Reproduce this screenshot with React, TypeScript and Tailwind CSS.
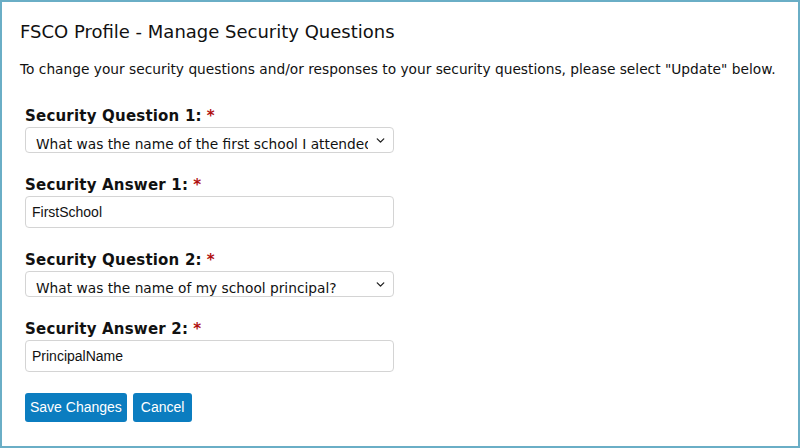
import { ChevronDown } from 'lucide-react';

const verdana = "font-['DejaVu_Sans',Verdana,sans-serif]";
const arial = "font-['Liberation_Sans',Arial,sans-serif]";

const Label = ({ text }: { text: string }) => (
  <div className={`${verdana} text-[15px] tracking-[0.2px] font-bold text-[#111] leading-none mb-[3px]`}>
    {text}
    <span className="text-[#b01010] ml-[5px]">*</span>
  </div>
);

const Select = ({ value }: { value: string }) => (
  <div className="relative w-[369px] h-[26px] border border-[#d4d4d4] rounded-[4px] bg-white overflow-hidden">
    <div className={`${verdana} text-[13.75px] text-[#111] ml-[10px] mr-[25px] pt-[4px] leading-[24px] whitespace-nowrap overflow-hidden`}>
      {value}
    </div>
    <ChevronDown className="absolute right-[6px] top-[6px] text-[#222]" size={13} strokeWidth={2.5} />
  </div>
);

const TextInput = ({ value }: { value: string }) => (
  <div className={`${arial} w-[369px] h-[32px] border border-[#d4d4d4] rounded-[4px] bg-white px-[6px] text-[14px] text-[#111] leading-[30px]`}>
    {value}
  </div>
);

export default function App() {
  return (
    <div className="w-[800px] h-[448px] bg-white border-2 border-[#6aaec6] box-border overflow-hidden">
      <div className="pl-[18px] pt-[21px]">
        <h1 className={`${verdana} text-[18px] text-[#111] leading-none`}>
          FSCO Profile - Manage Security Questions
        </h1>
        <p className={`${verdana} text-[13.75px] text-[#111] leading-none mt-[22px]`}>
          To change your security questions and/or responses to your security questions, please select "Update" below.
        </p>
        <div className="pl-[5px] mt-[32px] flex flex-col">
          <Label text="Security Question 1:" />
          <Select value="What was the name of the first school I attended?" />
          <div className="mt-[25px]">
            <Label text="Security Answer 1:" />
          </div>
          <TextInput value="FirstSchool" />
          <div className="mt-[25px]">
            <Label text="Security Question 2:" />
          </div>
          <Select value="What was the name of my school principal?" />
          <div className="mt-[25px]">
            <Label text="Security Answer 2:" />
          </div>
          <TextInput value="PrincipalName" />
          <div className="flex gap-[6px] mt-[21px]">
            <button className={`${arial} h-[29px] px-[5px] bg-[#0b7dc0] text-white text-[14px] rounded-[3px]`}>
              Save Changes
            </button>
            <button className={`${arial} h-[29px] px-[8px] bg-[#0b7dc0] text-white text-[14px] rounded-[3px]`}>
              Cancel
            </button>
          </div>
        </div>
      </div>
    </div>
  );
}
